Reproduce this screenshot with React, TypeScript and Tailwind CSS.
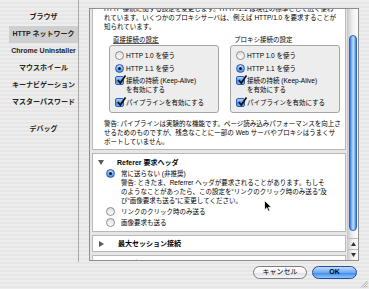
import React from "react";

const sideItems = [
  "ブラウザ",
  "HTTP ネットワーク",
  "Chrome Uninstaller",
  "マウスホイール",
  "キーナビゲーション",
  "マスターパスワード",
];

function Radio({ on }: { on?: boolean }) {
  if (on) {
    return (
      <span className="flex h-[9px] w-[9px] shrink-0 items-center justify-center rounded-full border border-[#2a5fb8] bg-[radial-gradient(circle_at_50%_30%,#d4e7ff,#5b9aec_65%,#2c6cd0)]">
        <span className="h-[3px] w-[3px] rounded-full bg-[#111]" />
      </span>
    );
  }
  return (
    <span className="h-[9px] w-[9px] shrink-0 rounded-full border border-[#8c8c8c] bg-[linear-gradient(#dedede,#ffffff)]" />
  );
}

function Check() {
  return (
    <span className="relative h-[9px] w-[9px] shrink-0 rounded-[2px] border border-[#2a5fb8] bg-[linear-gradient(#b4d4fb,#4a8ee8_60%,#7ab2f5)]">
      <svg
        viewBox="0 0 10 10"
        className="absolute -top-[2px] left-0 h-[10px] w-[10px]"
      >
        <path d="M1.8 5 L4.3 8 L9.5 0.5" stroke="#111" strokeWidth="1.7" fill="none" />
      </svg>
    </span>
  );
}

function Down() {
  return (
    <svg width="6" height="5" viewBox="0 0 6 5">
      <path d="M0 0H6L3 5Z" fill="#5a5a5a" />
    </svg>
  );
}

function Right() {
  return (
    <svg width="5" height="6" viewBox="0 0 5 6">
      <path d="M0 0V6L5 3Z" fill="#5a5a5a" />
    </svg>
  );
}

function GroupBox({ label, underline }: { label: string; underline?: boolean }) {
  return (
    <div className="flex w-[110px] flex-col">
      <div className="mb-[1px] pl-[4px] leading-[9px]">
        <span className={underline ? "border-b border-[#555]" : ""}>{label}</span>
      </div>
      <div className="rounded-[3px] border border-[#a5a5a5] bg-[#ededed] pb-[5px] pl-[5px] pt-[4px]">
        <div className="flex h-[10px] items-center gap-[2px]">
          <Radio />
          <span>HTTP 1.0 を使う</span>
        </div>
        <div className="mt-[3px] flex h-[10px] items-center gap-[2px]">
          <Radio on />
          <span>HTTP 1.1 を使う</span>
        </div>
        <div className="mt-[3px] flex items-start gap-[2px]">
          <Check />
          <span className="leading-[9px]">
            接続の持続 (Keep-Alive)
            <br />
            を有効にする
          </span>
        </div>
        <div className="mt-[4px] flex items-start gap-[2px]">
          <Check />
          <span className="leading-[9px]">パイプラインを有効にする</span>
        </div>
      </div>
    </div>
  );
}

function Scrollbar() {
  return (
    <div className="flex w-[11px] shrink-0 flex-col border-l border-[#c8c8c8] bg-[linear-gradient(to_right,#cfcfcf,#f0f0f0_45%,#fdfdfd)]">
      <div className="h-[26px]" />
      <div className="mx-[1px] h-[196px] rounded-full border border-[#2a63c4] bg-[linear-gradient(to_right,#3b7ae0,#8ec0fb_35%,#c2defd_55%,#78b0f7_80%,#3b7ae0)]" />
      <div className="flex-1" />
      <div className="flex h-[11px] items-center justify-center border-t border-[#bdbdbd]">
        <svg width="5" height="4" viewBox="0 0 5 4">
          <path d="M0 4H5L2.5 0Z" fill="#333" />
        </svg>
      </div>
      <div className="flex h-[11px] items-center justify-center border-t border-[#bdbdbd]">
        <svg width="5" height="4" viewBox="0 0 5 4">
          <path d="M0 0H5L2.5 4Z" fill="#333" />
        </svg>
      </div>
    </div>
  );
}

export default function App() {
  return (
    <div className="relative flex h-[289px] w-[369px] flex-col overflow-hidden bg-[repeating-linear-gradient(to_bottom,#ededed_0px,#ededed_2px,#e6e6e6_2px,#e6e6e6_4px)] font-['Liberation_Sans','Noto_Sans_CJK_JP',sans-serif] text-black">
      <div className="flex h-[262px]">
        {/* sidebar */}
        <div className="flex w-[79px] shrink-0 flex-col border-r border-[#a8a8a8] pt-[9px] text-[7px] font-bold text-[#222]">
          {sideItems.map((s, i) => (
            <div
              key={s}
              className={`ml-[9px] flex h-[17px] items-center justify-center whitespace-nowrap ${
                i === 1 ? "bg-[#cfcfcf]" : ""
              }`}
            >
              {s}
            </div>
          ))}
          <div className="ml-[9px] mt-[10px] flex h-[17px] items-center justify-center">
            デバッグ
          </div>
        </div>

        {/* scroll view */}
        <div className="flex-1 px-[10px] pt-[8px]">
          <div className="flex h-[253px] border border-[#8e8e8e] bg-white">
            <div className="flex flex-1 flex-col gap-[3px] overflow-hidden bg-[#e6e6e6] pl-[2px] pr-[1px] text-[6.5px] leading-[9px]">
              {/* HTTP section (scrolled) */}
              <div className="-mt-[9px] shrink-0 border border-[#b9b9b9] bg-white pb-[3px] pt-[3px]">
                <p className="whitespace-nowrap pl-[11px]">
                  HTTP 接続に関する設定を変更します。HTTP/1.1 は現在の標準として広く使わ
                  <br />
                  れています。いくつかのプロキシサーバは、例えば HTTP/1.0 を要求することが
                  <br />
                  知られています。
                </p>
                <div className="mt-[4px] flex gap-[11px] whitespace-nowrap pl-[16px]">
                  <GroupBox label="直接接続の設定" underline />
                  <GroupBox label="プロキシ接続の設定" />
                </div>
                <p className="mt-[6px] whitespace-nowrap pl-[11px]">
                  警告: パイプラインは実験的な機能です。ページ読み込みパフォーマンスを向上さ
                  <br />
                  せるためのものですが、残念なことに一部の Web サーバやプロキシはうまくサ
                  <br />
                  ポートしていません。
                </p>
              </div>

              {/* Referer */}
              <div className="shrink-0 whitespace-nowrap border border-[#b9b9b9] bg-white pb-[4px] pt-[4px]">
                <div className="flex items-center gap-[13px] pl-[5px]">
                  <Down />
                  <span className="text-[7px] font-bold">Referer 要求ヘッダ</span>
                </div>
                <div className="mt-[2px] flex items-center gap-[6px] pl-[13px]">
                  <Radio on />
                  <span>常に送らない (非推奨)</span>
                </div>
                <p className="pl-[28px]">
                  警告: ときたま、Referrer ヘッダが要求されることがあります。もしそ
                  <br />
                  のようなことがあったら、この設定を“リンクのクリック時のみ送る”及
                  <br />
                  び“画像要求も送る”に変更してください。
                </p>
                <div className="mt-[2px] flex items-center gap-[6px] pl-[13px]">
                  <Radio />
                  <span>リンクのクリック時のみ送る</span>
                </div>
                <div className="mt-[2px] flex items-center gap-[6px] pl-[13px]">
                  <Radio />
                  <span>画像要求も送る</span>
                </div>
              </div>

              <div className="flex shrink-0 items-center gap-[14px] border border-[#b9b9b9] bg-white py-[3px] pl-[6px]">
                <Right />
                <span className="text-[7px] font-bold">最大セッション接続</span>
              </div>
              <div className="flex shrink-0 items-center gap-[14px] border border-[#b9b9b9] bg-white py-[3px] pl-[6px]">
                <Right />
                <span className="text-[7px] font-bold">その他</span>
              </div>
            </div>
            <Scrollbar />
          </div>
        </div>
      </div>

      {/* buttons */}
      <div className="flex flex-1 items-start justify-end gap-[5px] pr-[12px] pt-[4px] text-[7px]">
        <button className="flex h-[13px] w-[54px] items-center justify-center rounded-full border border-[#7d7d7d] bg-[linear-gradient(#ffffff,#f3f3f3_50%,#dedede_51%,#f7f7f7)]">
          キャンセル
        </button>
        <button className="flex h-[13px] w-[45px] items-center justify-center rounded-full border border-[#1f4f9e] bg-[linear-gradient(#c0dcfc,#6ea9f2_50%,#3a86ea_51%,#92c6fb)] font-bold">
          OK
        </button>
      </div>

      <svg className="absolute bottom-[1px] right-[1px]" width="8" height="8" viewBox="0 0 8 8">
        <path d="M7.5 1L1 7.5M7.5 3.5L3.5 7.5M7.5 6L6 7.5" stroke="#9a9a9a" strokeWidth="0.8" />
      </svg>

      <svg className="absolute left-[264px] top-[200px]" width="8" height="12" viewBox="0 0 8 12">
        <path
          d="M0.5 0.5 V10 L2.8 7.8 L4.3 11.3 L5.8 10.6 L4.4 7.3 H7.5 Z"
          fill="#000"
          stroke="#fff"
          strokeWidth="0.8"
        />
      </svg>
    </div>
  );
}
